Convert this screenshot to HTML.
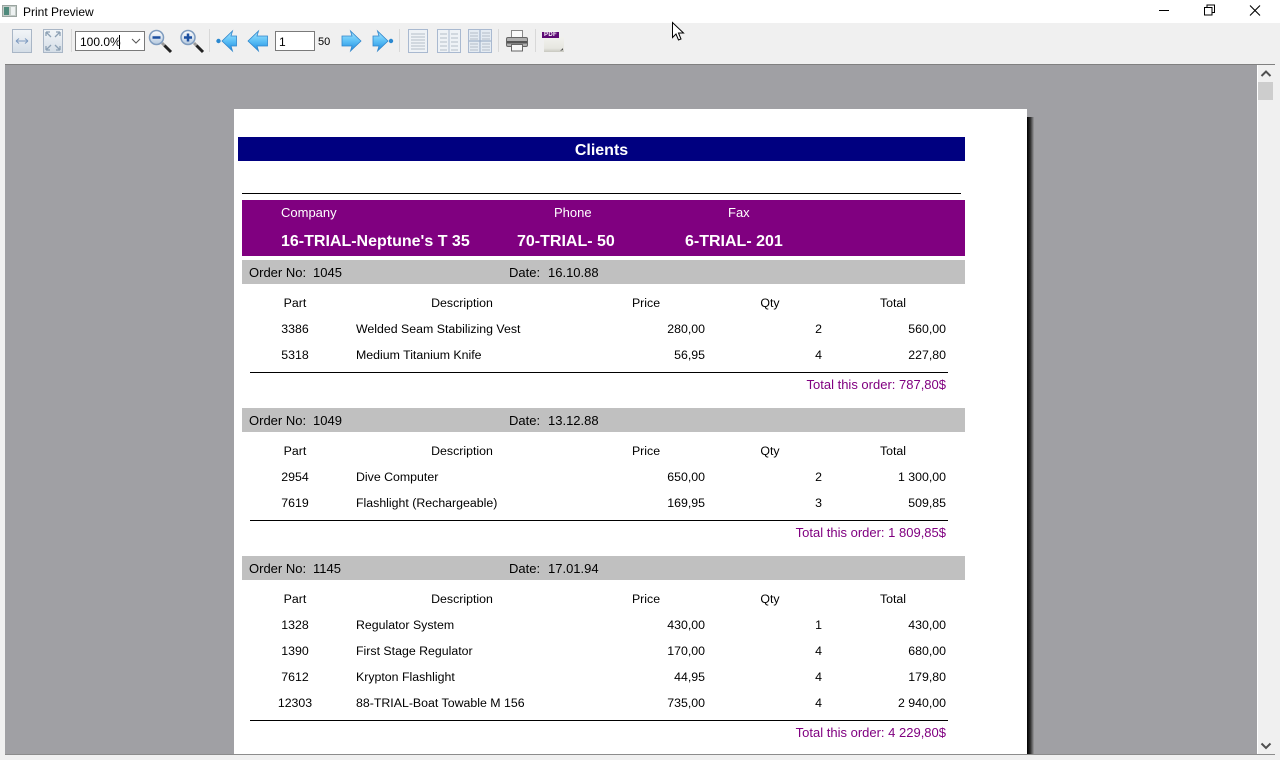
<!DOCTYPE html>
<html><head><meta charset="utf-8"><title>Print Preview</title>
<style>
html,body{margin:0;padding:0;width:1280px;height:760px;overflow:hidden;background:#f0f0f0;font-family:"Liberation Sans",sans-serif;font-size:12px;color:#000}
div,span{position:absolute;white-space:nowrap}
svg{position:absolute;overflow:visible}
.t{height:14px;line-height:14px}
#pg .t{margin-top:1px;font-size:12.35px}
#pg .o{font-size:13px}
.c{text-align:center}.r{text-align:right}
.ln{background:#000;height:1px}
.bar{background:#c0c0c0;left:242px;width:723px;height:24px}
.sep{position:absolute;top:29px;width:1px;height:23px;background:#d8d8d8}
.pur{color:#800080}
</style></head><body>
<div style="left:0;top:0;width:1280px;height:23px;background:#fff"></div>
<svg style="left:2px;top:5px" width="15" height="12"><rect x=".5" y=".5" width="14" height="11" fill="#c4ccc8" stroke="#9aa4a0"/><rect x="2" y="2" width="5" height="8" fill="#4f8a7c"/><rect x="9" y="2" width="4" height="8" fill="#eef2f2"/></svg>
<div class="t" style="left:23px;top:5px">Print Preview</div>
<svg style="left:1130px;top:0" width="150" height="23" fill="none" stroke="#000"><path d="M29 10.500H39"/><path d="M74.500 7.500h7.500v7.500h-7.500zM77 7.500v-2.500h7.500v7.500h-2.500"/><path d="M120 5.500L130 15.500M130 5.500L120 15.500" stroke-width="1.100"/></svg>

<!-- toolbar -->
<svg style="left:12px;top:29px" width="52" height="24">
<defs><linearGradient id="g1" x1="0" y1="0" x2="0" y2="1"><stop offset="0" stop-color="#f2f5f8"/><stop offset="1" stop-color="#d4dde6"/></linearGradient></defs>
<rect x=".5" y=".5" width="19" height="23" fill="url(#g1)" stroke="#a9b6c6"/><path d="M4 12H16M4 12l3-2.500M4 12l3 2.500M16 12l-3-2.500M16 12l-3 2.500" stroke="#7d9ac0" fill="none"/>
<rect x="31.500" y=".5" width="19" height="23" fill="url(#g1)" stroke="#a9b6c6"/><path d="M34 3l5 5M34 3h4M34 3v4M48 3l-5 5M48 3h-4M48 3v4M34 21l5-5M34 21h4M34 21v-4M48 21l-5-5M48 21h-4M48 21v-4" stroke="#8ca0b4" fill="none" stroke-width="1.300"/>
</svg>
<div class="sep" style="left:71px"></div>
<div style="left:75px;top:31px;width:68px;height:18px;background:#fff;border:1px solid #7a7a7a"></div>
<div class="t" style="left:80px;top:35px">100.0%</div>
<div style="left:119px;top:35px;width:1px;height:14px;background:#000"></div>
<svg style="left:131px;top:38px" width="10" height="6"><path d="M1 1l4 4 4-4" fill="none" stroke="#555"/></svg>
<svg style="left:148px;top:29px" width="56" height="24">
<defs><linearGradient id="l" x1="0" y1="0" x2="0" y2="1"><stop offset="0" stop-color="#ffffff"/><stop offset="1" stop-color="#b4c8de"/></linearGradient></defs>
<path d="M14 14l3 3" stroke="#9a9a9a" stroke-width="3"/><path d="M16.500 16.500l6.500 6.500" stroke="#222" stroke-width="3"/><circle cx="8.500" cy="8.500" r="7" fill="url(#l)" stroke="#7f9cbf" stroke-width="1.500"/><path d="M4.500 8.500h8" stroke="#1c4fa0" stroke-width="2.500"/>
<path d="M46 14l3 3" stroke="#9a9a9a" stroke-width="3"/><path d="M48.500 16.500l6.500 6.500" stroke="#222" stroke-width="3"/><circle cx="40" cy="8.500" r="7" fill="url(#l)" stroke="#7f9cbf" stroke-width="1.500"/><path d="M36 8.500h8M40 4.500v8" stroke="#1c4fa0" stroke-width="2.500"/>
</svg>
<div class="sep" style="left:209px"></div>
<svg style="left:216px;top:29px" width="53" height="24">
<defs><linearGradient id="a" x1="0" y1="0" x2="0" y2="1"><stop offset="0" stop-color="#a8e6ff"/><stop offset=".5" stop-color="#5cc0f6"/><stop offset="1" stop-color="#1f8be0"/></linearGradient></defs>
<circle cx="2.500" cy="12" r="2.200" fill="#2a88d0"/><path d="M6 12L16.500 2 15 7h5.500v10H15l1.500 5z" fill="url(#a)" stroke="#2f86cc" stroke-width=".8"/>
<path d="M32 12L42.500 2 41 7h10.500v10H41l1.500 5z" fill="url(#a)" stroke="#2f86cc" stroke-width=".8"/>
</svg>
<div style="left:275px;top:31px;width:38px;height:18px;background:#fff;border:1px solid #7a7a7a"></div>
<div class="t" style="left:279px;top:35px">1</div>
<div class="t" style="left:318px;top:35px;font-size:11px">50</div>
<svg style="left:341px;top:29px" width="53" height="24">
<path d="M20 12L9.500 2 11 7H1v10h10l-1.500 5z" fill="url(#a)" stroke="#2f86cc" stroke-width=".8"/>
<path d="M47 12L36.500 2 38 7h-6v10h6l-1.500 5z" fill="url(#a)" stroke="#2f86cc" stroke-width=".8"/><circle cx="50" cy="12" r="2.200" fill="#2a88d0"/>
</svg>
<div class="sep" style="left:399px"></div>
<svg style="left:408px;top:29px" width="85" height="24" fill="none">
<rect x=".5" y=".5" width="19" height="23" fill="#eef2f6" stroke="#a9b9d0"/><path d="M3 5h14M3 8h14M3 11h14M3 14h14M3 17h14M3 20h14" stroke="#b4bec8"/>
<rect x="29.500" y=".5" width="23" height="23" fill="#eef2f6" stroke="#a9b9d0"/><path d="M41 1v22" stroke="#a9b9d0"/><path d="M32 5h7M32 9h7M32 13h7M32 17h7M32 21h7M43 5h7M43 9h7M43 13h7M43 17h7M43 21h7" stroke="#b4bec8"/>
<rect x="60.500" y=".5" width="23" height="23" fill="#e4ebf2" stroke="#a9b9d0"/><path d="M72 1v22M61 12h22" stroke="#a0b2ca" stroke-width="1.200"/><path d="M62 4h8M62 7h8M62 10h8M74 4h8M74 7h8M74 10h8M62 15h8M62 18h8M62 21h8M74 15h8M74 18h8M74 21h8" stroke="#b4bec8"/>
</svg>
<div class="sep" style="left:498px"></div>
<svg style="left:506px;top:30px" width="22" height="22">
<rect x="5.500" y=".5" width="11" height="9" fill="#fafafa" stroke="#888"/><rect x=".5" y="7.500" width="21" height="9" rx="1.500" fill="#b0b0b0" stroke="#666"/><rect x="1" y="11" width="20" height="2.500" fill="#555"/><rect x="5.500" y="14.500" width="11" height="6.500" fill="#f6f6f6" stroke="#666"/>
</svg>
<div class="sep" style="left:535px"></div>
<svg style="left:541px;top:30px" width="24" height="24">
<defs><linearGradient id="pd" x1="0" y1="0" x2="0" y2="1"><stop offset="0" stop-color="#f2f2ee"/><stop offset=".75" stop-color="#e6e6e0"/><stop offset="1" stop-color="#c8c8c0"/></linearGradient></defs>
<rect x="3" y="7" width="20" height="15" fill="url(#pd)"/><path d="M19 21l3-3v2z" fill="#555"/>
<rect x="1" y="2" width="17" height="6" fill="#5d0a74"/>
</svg>
<div style="left:542px;top:32px;width:17px;text-align:center;font:bold 6px/6px 'Liberation Sans',sans-serif;color:#fff;letter-spacing:.3px">PDF</div>

<!-- cursor -->
<svg style="left:672px;top:22px;z-index:5" width="13" height="20"><path d="M.5.500V15.500l3.500-3.500 2.500 6 2.500-1-2.500-6h5z" fill="#fff" stroke="#000"/></svg>

<!-- viewport -->
<div style="left:5px;top:64px;width:1270px;height:690px;background:#a0a0a4;border-top:1px solid #808080;box-sizing:border-box;overflow:hidden"></div>
<div style="left:1257px;top:65px;width:18px;height:689px;background:#f0f0f0;border-left:1px solid #fff;box-sizing:border-box"></div>
<div style="left:1258px;top:82px;width:15px;height:18px;background:#cdcdcd"></div>
<svg style="left:1260px;top:70px" width="12" height="8"><path d="M1.500 6L6 1.500 10.500 6" fill="none" stroke="#505050" stroke-width="2"/></svg>
<svg style="left:1260px;top:742px" width="12" height="8"><path d="M1.500 1.500L6 6 10.500 1.500" fill="none" stroke="#505050" stroke-width="2"/></svg>
<div style="left:5px;top:754px;width:1270px;height:1px;background:#8c8c8c"></div>

<div style="left:1027px;top:117px;width:7px;height:637px;background:linear-gradient(to right,#000 0,#2a2a2a 45%,#9a9a9c 100%)"></div>
<div style="left:234px;top:109px;width:793px;height:645px;background:#fff"></div>

<!-- page content -->
<div id="pg" style="left:0;top:0;width:1280px;height:760px">
<div style="left:238px;top:137px;width:727px;height:24px;background:#000080"></div>
<div class="t c" style="left:238px;top:141px;width:727px;height:18px;line-height:17px;font-size:16px;font-weight:bold;color:#fff">Clients</div>
<div class="ln" style="left:242px;top:193px;width:719px"></div>
<div style="left:242px;top:200px;width:723px;height:56px;background:#800080"></div>
<div class="t o" style="left:281px;top:205px;color:#fff">Company</div>
<div class="t o" style="left:554px;top:205px;color:#fff">Phone</div>
<div class="t o" style="left:728px;top:205px;color:#fff">Fax</div>
<div class="t" style="left:281px;top:232px;height:17px;line-height:17px;font-size:16px;font-weight:bold;color:#fff">16-TRIAL-Neptune's T 35</div>
<div class="t" style="left:517px;top:232px;height:17px;line-height:17px;font-size:16px;font-weight:bold;color:#fff">70-TRIAL- 50</div>
<div class="t" style="left:685px;top:232px;height:17px;line-height:17px;font-size:16px;font-weight:bold;color:#fff">6-TRIAL- 201</div>

<!-- Order 1045 -->
<div class="bar" style="top:260px"></div>
<div class="t o" style="left:249px;top:265px">Order No:</div><div class="t o" style="left:313px;top:265px">1045</div>
<div class="t o" style="left:509px;top:265px">Date:</div><div class="t o" style="left:548px;top:265px">16.10.88</div>
<div class="t c" style="left:265px;top:295px;width:60px">Part</div><div class="t c" style="left:402px;top:295px;width:120px">Description</div><div class="t c" style="left:616px;top:295px;width:60px">Price</div><div class="t c" style="left:740px;top:295px;width:60px">Qty</div><div class="t c" style="left:863px;top:295px;width:60px">Total</div>
<div class="t c" style="left:265px;top:321px;width:60px">3386</div><div class="t" style="left:356px;top:321px">Welded Seam Stabilizing Vest</div><div class="t r" style="left:605px;top:321px;width:100px">280,00</div><div class="t r" style="left:772px;top:321px;width:50px">2</div><div class="t r" style="left:846px;top:321px;width:100px">560,00</div>
<div class="t c" style="left:265px;top:347px;width:60px">5318</div><div class="t" style="left:356px;top:347px">Medium Titanium Knife</div><div class="t r" style="left:605px;top:347px;width:100px">56,95</div><div class="t r" style="left:772px;top:347px;width:50px">4</div><div class="t r" style="left:846px;top:347px;width:100px">227,80</div>
<div class="ln" style="left:250px;top:372px;width:698px"></div>
<div class="t r pur o" style="left:646px;top:377px;width:300px">Total this order: 787,80$</div>

<!-- Order 1049 -->
<div class="bar" style="top:408px"></div>
<div class="t o" style="left:249px;top:413px">Order No:</div><div class="t o" style="left:313px;top:413px">1049</div>
<div class="t o" style="left:509px;top:413px">Date:</div><div class="t o" style="left:548px;top:413px">13.12.88</div>
<div class="t c" style="left:265px;top:443px;width:60px">Part</div><div class="t c" style="left:402px;top:443px;width:120px">Description</div><div class="t c" style="left:616px;top:443px;width:60px">Price</div><div class="t c" style="left:740px;top:443px;width:60px">Qty</div><div class="t c" style="left:863px;top:443px;width:60px">Total</div>
<div class="t c" style="left:265px;top:469px;width:60px">2954</div><div class="t" style="left:356px;top:469px">Dive Computer</div><div class="t r" style="left:605px;top:469px;width:100px">650,00</div><div class="t r" style="left:772px;top:469px;width:50px">2</div><div class="t r" style="left:846px;top:469px;width:100px">1 300,00</div>
<div class="t c" style="left:265px;top:495px;width:60px">7619</div><div class="t" style="left:356px;top:495px">Flashlight (Rechargeable)</div><div class="t r" style="left:605px;top:495px;width:100px">169,95</div><div class="t r" style="left:772px;top:495px;width:50px">3</div><div class="t r" style="left:846px;top:495px;width:100px">509,85</div>
<div class="ln" style="left:250px;top:520px;width:698px"></div>
<div class="t r pur o" style="left:646px;top:525px;width:300px">Total this order: 1 809,85$</div>

<!-- Order 1145 -->
<div class="bar" style="top:556px"></div>
<div class="t o" style="left:249px;top:561px">Order No:</div><div class="t o" style="left:313px;top:561px">1145</div>
<div class="t o" style="left:509px;top:561px">Date:</div><div class="t o" style="left:548px;top:561px">17.01.94</div>
<div class="t c" style="left:265px;top:591px;width:60px">Part</div><div class="t c" style="left:402px;top:591px;width:120px">Description</div><div class="t c" style="left:616px;top:591px;width:60px">Price</div><div class="t c" style="left:740px;top:591px;width:60px">Qty</div><div class="t c" style="left:863px;top:591px;width:60px">Total</div>
<div class="t c" style="left:265px;top:617px;width:60px">1328</div><div class="t" style="left:356px;top:617px">Regulator System</div><div class="t r" style="left:605px;top:617px;width:100px">430,00</div><div class="t r" style="left:772px;top:617px;width:50px">1</div><div class="t r" style="left:846px;top:617px;width:100px">430,00</div>
<div class="t c" style="left:265px;top:643px;width:60px">1390</div><div class="t" style="left:356px;top:643px">First Stage Regulator</div><div class="t r" style="left:605px;top:643px;width:100px">170,00</div><div class="t r" style="left:772px;top:643px;width:50px">4</div><div class="t r" style="left:846px;top:643px;width:100px">680,00</div>
<div class="t c" style="left:265px;top:669px;width:60px">7612</div><div class="t" style="left:356px;top:669px">Krypton Flashlight</div><div class="t r" style="left:605px;top:669px;width:100px">44,95</div><div class="t r" style="left:772px;top:669px;width:50px">4</div><div class="t r" style="left:846px;top:669px;width:100px">179,80</div>
<div class="t c" style="left:265px;top:695px;width:60px">12303</div><div class="t" style="left:356px;top:695px">88-TRIAL-Boat Towable M 156</div><div class="t r" style="left:605px;top:695px;width:100px">735,00</div><div class="t r" style="left:772px;top:695px;width:50px">4</div><div class="t r" style="left:846px;top:695px;width:100px">2 940,00</div>
<div class="ln" style="left:250px;top:720px;width:698px"></div>
<div class="t r pur o" style="left:646px;top:725px;width:300px">Total this order: 4 229,80$</div>
</div>
</body></html>
